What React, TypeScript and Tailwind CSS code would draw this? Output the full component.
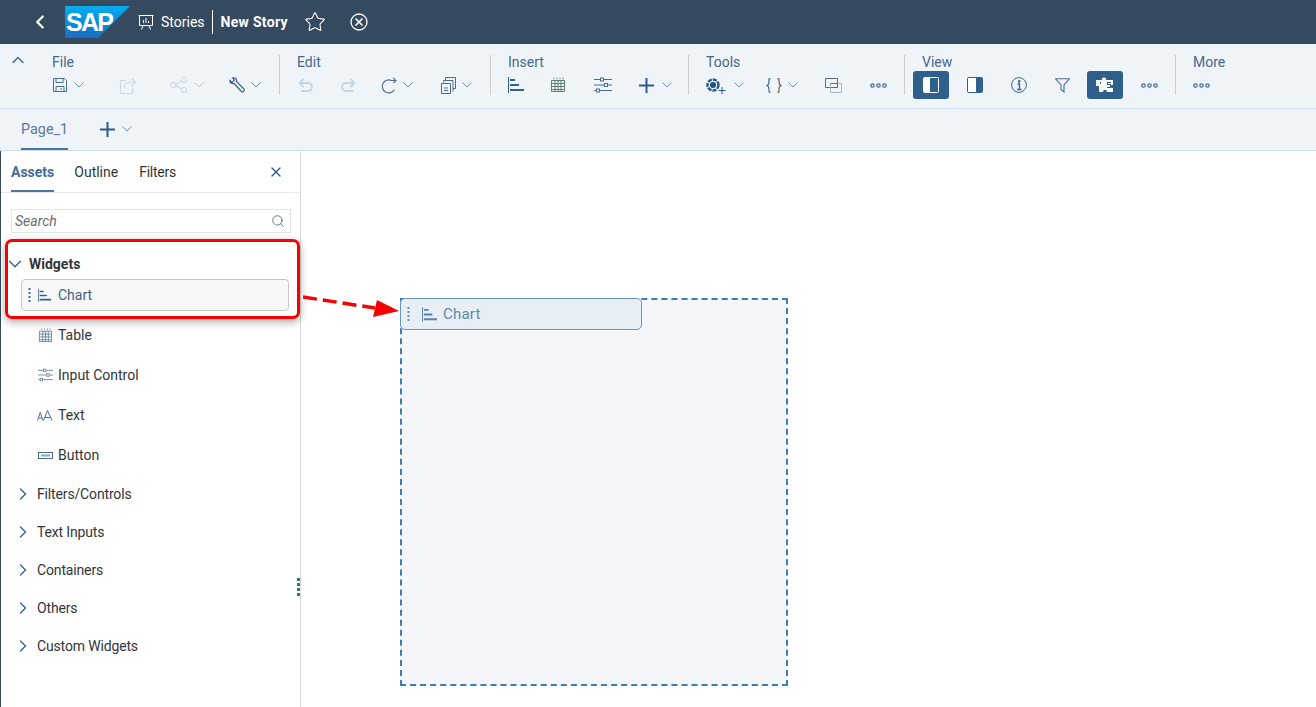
import type { ReactNode } from 'react';
import { ChevronLeft, ChevronDown, ChevronRight, ChevronUp, Star, X, Search } from 'lucide-react';

const font = { fontFamily: 'Roboto, "Noto Sans", sans-serif' };

const ICON = '#32628c';

const Chev = ({ className = '' }: { className?: string }) => (
    <svg width="10" height="6" viewBox="0 0 10 6" fill="none" stroke="#6f8db0" strokeWidth="1" className={className}>
        <path d="M.5.5 5 5 9.5.5" />
    </svg>
);

const Dots = ({ className = '' }: { className?: string }) => (
    <svg width="17" height="5" viewBox="0 0 17 5" fill="none" stroke="#4a6c92" strokeWidth="1.2" className={className}>
        <circle cx="2.5" cy="2.5" r="1.7" />
        <circle cx="8.5" cy="2.5" r="1.7" />
        <circle cx="14.5" cy="2.5" r="1.7" />
    </svg>
);

const BarChartIcon = ({ color = ICON, size = 16, className = '' }: { color?: string; size?: number; className?: string }) => (
    <svg width={size} height={size} viewBox="0 0 16 16" fill="none" stroke={color} className={className}>
        <path d="M.5 0v16" />
        <path d="M2 3h5M2 8h9M2 13h14" strokeWidth="2" />
    </svg>
);

const TableIcon = ({ size = 16, color = '#5d7f76', className = '' }: { size?: number; color?: string; className?: string }) => (
    <svg width={size} height={size} viewBox="0 0 16 16" fill="none" stroke={color} strokeWidth="1" className={className}>
        <path d="M1.5 3.5h13v11h-13zM1.5 6.5h13M1.5 9.5h13M1.5 12.500h13M5 3.500v11M8 3.500v11M11 3.500v11" />
        <path d="M4 .5v2M7 .5v2M10 .5v2M13 .5v2" stroke="#8a9aa8" />
    </svg>
);

const SlidersIcon = ({ className = '', color = '#4a6c92' }: { className?: string; color?: string }) => (
    <svg width="18" height="16" viewBox="0 0 18 16" fill="none" stroke={color} strokeWidth="1" className={className}>
        <path d="M0 2.500h6M10 2.500h8M0 8h10M14 8h4M0 13.500h2M6 13.500h12" />
        <rect x="6.500" y="1" width="3" height="3" />
        <rect x="10.500" y="6.500" width="3" height="3" />
        <rect x="2.500" y="12" width="3" height="3" />
    </svg>
);

const SaveIcon = () => (
    <svg width="16" height="16" viewBox="0 0 16 16" fill="none" stroke="#4a6c92">
        <path d="M1.500 1.500h11l2 2v11h-13z" />
        <path d="M4 1.500v4h7v-4M4 14.500v-5h8v5M9 11v2" />
    </svg>
);

const ShareIcon = () => (
    <svg width="18" height="17" viewBox="0 0 18 17" fill="none" stroke="#cfdbe6" strokeWidth="1.2">
        <path d="M7 3.500H1.500v13h12V11" />
        <path d="M5 11c.5-4 3-6 7-6h4M13 1.500 16.500 5 13 8.500" />
    </svg>
);

const NetworkIcon = () => (
    <svg width="18" height="16" viewBox="0 0 18 16" fill="none" stroke="#cfdbe6" strokeWidth="1.2">
        <circle cx="3.500" cy="8" r="2.700" />
        <circle cx="14" cy="3" r="2.500" />
        <circle cx="14" cy="13" r="2.500" />
        <path d="M6 7l5.700-3M6 9l5.700 3" />
    </svg>
);

const WrenchIcon = () => (
    <svg width="16" height="16" viewBox="0 0 16 16" fill="none" stroke="#3f6288" strokeWidth="1.2">
        <path d="M1 3.500 3 5.500 5.500 3 3.500 1C5.500.2 8 1.500 7.500 4.500L15 12c.8 1 .2 2-.5 2.500-.7.6-1.500.5-2 0L5 6.500C2.500 7 .5 5.500 1 3.500z" />
    </svg>
);

const UndoIcon = ({ flip = false }: { flip?: boolean }) => (
    <svg width="16" height="14" viewBox="0 0 16 14" fill="none" stroke="#c6d5e2" strokeWidth="1.8" className={flip ? '-scale-x-100' : ''}>
        <path d="M5.500 1 1.500 5l4 4M1.500 5H10c5 0 5 8 0 8H3" />
    </svg>
);

const RefreshIcon = () => (
    <svg width="16" height="17" viewBox="0 0 16 17" fill="none" stroke="#4a6c92" strokeWidth="1.1">
        <path d="M13.500 12.500A6.500 6.500 0 1 1 10.500 3.500H15M12 .8l3 2.700-2.500 2.500" />
    </svg>
);

const CopyIcon = () => (
    <svg width="15" height="17" viewBox="0 0 15 17" fill="none" stroke="#4a6c92">
        <path d="M4.500 3V.5h10v11H12M2.500 5.500V3.500h9.500v11M.5 6.500h9v10h-9zM3 11h4M3 13.500h4" />
    </svg>
);

const PlusIcon = ({ className = '' }: { className?: string }) => (
    <svg width="15" height="15" viewBox="0 0 15 15" stroke="#2b5a87" strokeWidth="2" className={className}>
        <path d="M7.500 0v15M0 7.500h15" />
    </svg>
);

const ModelIcon = () => (
    <svg width="20" height="17" viewBox="0 0 20 17" fill="#2d5b87">
        <circle cx="7" cy="8" r="5.500" fill="none" stroke="#2d5b87" strokeWidth="2.500" strokeDasharray="4 1" />
        <circle cx="7" cy="8" r="3" fill="#1f4f7c" />
        <path d="M16 10v7M12.500 13.500h7" stroke="#2d5b87" fill="none" />
    </svg>
);

const BracesIcon = () => (
    <svg width="16" height="15" viewBox="0 0 16 15" fill="none" strokeWidth="1.2">
        <path d="M4.500.5C2.500.5 3 2 3 4c0 2-.5 3-2 3.500C2.500 8 3 9 3 11c0 2-.5 3.500 1.500 3.500" stroke="#3a638e" />
        <path d="M11.500.5c2 0 1.500 1.500 1.500 3.500 0 2 .5 3 2 3.500-1.500.5-2 1.500-2 3.500 0 2 .5 3.500-1.500 3.500" stroke="#7d4f50" />
    </svg>
);

const OverlapIcon = () => (
    <svg width="17" height="15" viewBox="0 0 17 15" fill="none">
        <path d="M.5.500h12v9H.5z" stroke="#4a6c92" />
        <path d="M5.500 5.500h11v9h-11z" stroke="#a9b6c2" />
        <path d="M5.500 5.500h7v4" stroke="#4a6c92" />
    </svg>
);

const PanelIcon = ({ side, active }: { side: 'left' | 'right'; active?: boolean }) => (
    <svg width="16" height="16" viewBox="0 0 16 16">
        <rect x=".5" y=".5" width="15" height="15" rx="1" fill={active ? '#2f5f8b' : '#fff'} stroke={active ? '#fff' : '#2f5f8b'} />
        {side === 'left' ? <rect x="1" y="1" width="6" height="14" fill="#fff" /> : <rect x="9" y="1" width="6" height="14" fill="#2f5f8b" />}
    </svg>
);

const InfoIcon = () => (
    <svg width="16" height="16" viewBox="0 0 16 16" fill="none" stroke="#3f6690">
        <circle cx="8" cy="8" r="7.400" />
        <path d="M6.500 7h2v5M6 12.500h4.500" strokeWidth="1.300" />
        <path d="M7.500 3.500h1.400v1.700H7.500z" fill="#3f6690" />
    </svg>
);

const FilterIcon = () => (
    <svg width="15" height="15" viewBox="0 0 15 15" fill="none" stroke="#4a6c92" strokeWidth="1.100">
        <path d="M.5.800h14L9 7v7l-3-2.500V7z" />
    </svg>
);

const PuzzleIcon = () => (
    <svg width="18" height="16" viewBox="0 0 18 16" fill="#fff">
        <path d="M0 3h6V2c0-2 4-2 4 0v1h7v5h-1c-2 0-2 3 0 3h1v4h-6c0-3-4-3-4 0H3V9H0z" />
        <path d="M11 5h4v1h-3v1h3v4h-4v-1h3V8h-3z" fill="#2f5f8b" />
        <path d="M4 5h1v2H4z" fill="#2f5f8b" />
    </svg>
);

const GripDots = ({ color }: { color: string }) => (
    <svg width="3" height="15" viewBox="0 0 3 15" fill={color}>
        <rect x=".5" y="0" width="2" height="2" />
        <rect x=".5" y="4" width="2" height="2" />
        <rect x=".5" y="8" width="2" height="2" />
        <rect x=".5" y="12" width="2" height="2" />
    </svg>
);

const TextIcon = () => (
    <svg width="16" height="11" viewBox="0 0 16 11" fill="none" stroke="#4a6c92">
        <path d="M.5 10.500 3.200 2.500l2.800 8M1.500 8h3.500M6.500 10.500 10.500.5l4.500 10M8 7.500h5.500" />
    </svg>
);

const ButtonIcon = () => (
    <svg width="15" height="7" viewBox="0 0 15 7" fill="none" stroke="#4a6c92">
        <rect x=".5" y=".5" width="14" height="6" />
        <path d="M3 3.500h9" strokeWidth="2" stroke="#8ea3b8" />
    </svg>
);

const SapLogo = () => (
    <svg width="65" height="32" viewBox="0 0 65 32" className="ml-[14px]">
        <defs>
            <linearGradient id="sapGrad" x1="0" y1="0" x2="0" y2="1">
                <stop offset="0" stopColor="#00aeef" />
                <stop offset="1" stopColor="#1b6cc2" />
            </linearGradient>
        </defs>
        <polygon points="0,0 65,0 33,32 0,32" fill="url(#sapGrad)" />
        <text x="1" y="25" fill="#fff" fontSize="25" fontWeight="700" fontFamily="Liberation Sans" letterSpacing="-1.700">SAP</text>
    </svg>
);

// one block of the ribbon: a label above a row of icons, closed by a short rule
const Group = ({ label, className, children }: { label: string; className: string; children: ReactNode }) => (
    <div className={`mt-[11px] h-[40px] border-r border-[#c9cfd4] pl-[17px] ${className}`}>
        <div className="h-[15px] text-[14px] leading-[15px] text-[#47688c]">{label}</div>
        <div className="mt-[7px] flex h-[16px] items-center">{children}</div>
    </div>
);

const WidgetRow = ({ icon, label }: { icon: ReactNode; label: string }) => (
    <div className="flex h-[40px] items-center">
        <div className="flex w-[57px] justify-end pr-[5px]">{icon}</div>
        <span className="text-[14px] text-[#32363a]">{label}</span>
    </div>
);

const Section = ({ label }: { label: string }) => (
    <div className="flex h-[38px] items-center pl-[12px] text-[14px] tracking-[-0.15px] text-[#32363a]">
        <ChevronRight size={20} strokeWidth={1.6} className="mr-[4px] text-[#2f6596]" />
        {label}
    </div>
);

const App = () => {
    return (
        <div className="relative flex h-[707px] w-[1316px] flex-col overflow-hidden bg-white" style={font}>
            {/* Shell bar */}
            <header className="flex h-[44px] shrink-0 items-center bg-[#354a5f] pl-[29px]">
                <ChevronLeft size={22} strokeWidth={2.5} className="text-white" />
                <SapLogo />
                <svg width="16" height="16" viewBox="0 0 16 16" fill="none" stroke="#fff" className="ml-[8px]">
                    <path d="M.5 1.500h15M1.500 1.500v10h13v-10M5 11.500l-1.500 4M11 11.500l1.500 4M5.500 9V6M8 9V4M10.500 9V7" />
                </svg>
                <span className="ml-[7px] text-[14px] text-white">Stories</span>
                <div className="ml-[7px] mr-[8px] h-[24px] w-px bg-white" />
                <span className="text-[14px] font-bold tracking-[0.3px] text-white">New Story</span>
                <Star size={22} strokeWidth={1.2} className="ml-[16px] text-white" />
                <svg width="18" height="18" viewBox="0 0 18 18" fill="none" stroke="#fff" strokeWidth="1.300" className="ml-[24px]">
                    <circle cx="9" cy="9" r="8" />
                    <path d="M5.500 5.500l7 7M12.500 5.500l-7 7" strokeWidth="1.600" />
                </svg>
            </header>

            {/* Ribbon */}
            <div className="flex h-[65px] shrink-0 border-b border-[#cfe0f0] bg-[#eff4f9]">
                <div className="w-[52px] pl-[8px] pt-[6px]">
                    <ChevronUp size={20} strokeWidth={1.5} className="text-[#32628c]" />
                </div>
                <Group label="File" className="w-[228px] !pl-0">
                    <SaveIcon />
                    <Chev className="ml-[6px]" />
                    <div className="ml-[35px]"><ShareIcon /></div>
                    <div className="ml-[33px]"><NetworkIcon /></div>
                    <Chev className="ml-[6px] opacity-40" />
                    <div className="ml-[25px]"><WrenchIcon /></div>
                    <Chev className="ml-[6px]" />
                </Group>
                <Group label="Edit" className="w-[211px]">
                    <div className="ml-[1px]"><UndoIcon /></div>
                    <div className="ml-[26px]"><UndoIcon flip /></div>
                    <div className="ml-[25px]"><RefreshIcon /></div>
                    <Chev className="ml-[6px]" />
                    <div className="ml-[28px]"><CopyIcon /></div>
                    <Chev className="ml-[6px]" />
                </Group>
                <Group label="Insert" className="w-[198px]">
                    <BarChartIcon />
                    <TableIcon className="ml-[26px]" />
                    <SlidersIcon className="ml-[28px]" />
                    <PlusIcon className="ml-[27px]" />
                    <Chev className="ml-[8px]" />
                </Group>
                <Group label="Tools" className="w-[216px]">
                    <ModelIcon />
                    <Chev className="ml-[8px]" />
                    <div className="ml-[22px]"><BracesIcon /></div>
                    <Chev className="ml-[6px]" />
                    <div className="ml-[27px]"><OverlapIcon /></div>
                    <Dots className="ml-[28px]" />
                </Group>
                <div className="mt-[11px] h-[40px] w-[271px] border-r border-[#c9cfd4] pl-[8px]">
                    <div className="h-[15px] pl-[9px] text-[14px] leading-[15px] text-[#47688c]">View</div>
                    <div className="mt-[1px] flex h-[28px] items-center">
                        <div className="flex h-[28px] w-[36px] items-center justify-center rounded-[3px] bg-[#2f5f8b]"><PanelIcon side="left" active /></div>
                        <div className="ml-[18px]"><PanelIcon side="right" /></div>
                        <div className="ml-[28px]"><InfoIcon /></div>
                        <div className="ml-[28px]"><FilterIcon /></div>
                        <div className="ml-[17px] flex h-[28px] w-[36px] items-center justify-center rounded-[3px] bg-[#2f5f8b]"><PuzzleIcon /></div>
                        <Dots className="ml-[18px]" />
                    </div>
                </div>
                <div className="mt-[11px] pl-[17px]">
                    <div className="h-[15px] text-[14px] leading-[15px] text-[#47688c]">More</div>
                    <Dots className="mt-[13px]" />
                </div>
            </div>

            {/* Page tabs */}
            <div className="flex h-[42px] shrink-0 border-b border-[#cfdfee] bg-[#eff4f9] pl-[21px]">
                <div className="flex h-[41px] w-[47px] items-center border-b-2 border-[#4a75a3] pt-[2px] text-[14.4px] text-[#5a7aa0]">Page_1</div>
                <PlusIcon className="ml-[32px] mt-[13px]" />
                <Chev className="ml-[7px] mt-[17px]" />
            </div>

            <div className="flex min-h-0 flex-1">
                {/* Assets panel */}
                <aside className="w-[301px] shrink-0 border-l border-r border-l-[#354a5f] border-r-[#d9d9d9]">
                    <div className="flex h-[42px] items-start border-b border-[#e5e9ee] pl-[10px]">
                        <div className="flex h-[41px] items-center border-b-2 border-[#4a75a3] pt-[3px] text-[14px] font-bold text-[#456c96]">Assets</div>
                        <div className="ml-[20px] flex h-[41px] items-center border-b-2 border-transparent pt-[3px] text-[14px] text-[#32363a]">Outline</div>
                        <div className="ml-[21px] flex h-[41px] items-center border-b-2 border-transparent pt-[3px] text-[14px] tracking-[-0.25px] text-[#32363a]">Filters</div>
                        <X size={16} strokeWidth={2} className="ml-[92px] mt-[13px] text-[#2f5f8b]" />
                    </div>
                    <div className="ml-[10px] mt-[16px] flex h-[24px] w-[280px] items-center justify-between border border-[#e5e5e5] pl-[3px] pr-[5px]">
                        <span className="text-[14px] italic text-[#6a6d70]">Search</span>
                        <Search size={14} strokeWidth={1.5} className="text-[#4a6c92]" />
                    </div>
                    <div className="mt-[19px] flex h-[24px] items-center pl-[3px] text-[14px] font-bold text-[#32363a]">
                        <ChevronDown size={22} strokeWidth={1.5} className="mr-[3px] text-[#2f6596]" />
                        Widgets
                    </div>
                    <div className="ml-[20px] mt-[3px] flex h-[32px] w-[268px] items-center rounded-[4px] border border-[#c4c7ca] bg-[#f7f7f7] pl-[6px]">
                        <GripDots color="#4a6c92" />
                        <BarChartIcon size={13} className="ml-[7px]" />
                        <span className="ml-[7px] text-[14px] text-[#45607c]">Chart</span>
                    </div>
                    <div className="mt-[4px]">
                        <WidgetRow icon={<TableIcon size={15} color="#6b8aa8" />} label="Table" />
                        <WidgetRow icon={<SlidersIcon color="#6b7f92" className="h-[14px] w-[15px]" />} label="Input Control" />
                        <WidgetRow icon={<TextIcon />} label="Text" />
                        <WidgetRow icon={<ButtonIcon />} label="Button" />
                    </div>
                    <Section label="Filters/Controls" />
                    <Section label="Text Inputs" />
                    <Section label="Containers" />
                    <Section label="Others" />
                    <Section label="Custom Widgets" />
                </aside>

                {/* Canvas */}
                <main className="flex-1 pl-[99px] pt-[147px]">
                    <div className="h-[388px] w-[388px] border-2 border-dashed border-[#3f7db5] bg-[#f4f6f9]">
                        <div className="-ml-[2px] -mt-[2px] flex h-[32px] w-[242px] items-center rounded-[5px] border border-[#6a96be] bg-[#e7eef6] pl-[6px]">
                            <GripDots color="#6f8fb0" />
                            <BarChartIcon color="#5b82a8" size={15} className="ml-[12px]" />
                            <span className="ml-[6px] pt-[1px] text-[15px] tracking-[0.2px] text-[#6488aa]">Chart</span>
                        </div>
                    </div>
                </main>
            </div>

            {/* Annotation over the panel: red frame and arrow */}
            <div className="absolute left-[5px] top-[239px] h-[80px] w-[295px] rounded-[7px] border-[3px] border-[#f60000] shadow-[0_3px_8px_rgba(0,0,0,0.35)]" />
            <svg width="100" height="26" viewBox="0 0 100 26" fill="none" className="absolute left-[303px] top-[294px]">
                <path d="M0 3 72 14" stroke="#f60000" strokeWidth="3.500" strokeDasharray="14 6" />
                <path d="M74 6 96 17 70 23z" fill="#f60000" />
            </svg>

            {/* Panel resize handle */}
            <div className="absolute left-[297px] top-[578px] flex flex-col gap-[2px]">
                <div className="h-[3px] w-[3px] bg-[#3f6f86]" />
                <div className="h-[3px] w-[3px] bg-[#3f6f86]" />
                <div className="h-[3px] w-[3px] bg-[#3f6f86]" />
                <div className="h-[3px] w-[3px] bg-[#3f6f86]" />
            </div>
        </div>
    );
};

export default App;
